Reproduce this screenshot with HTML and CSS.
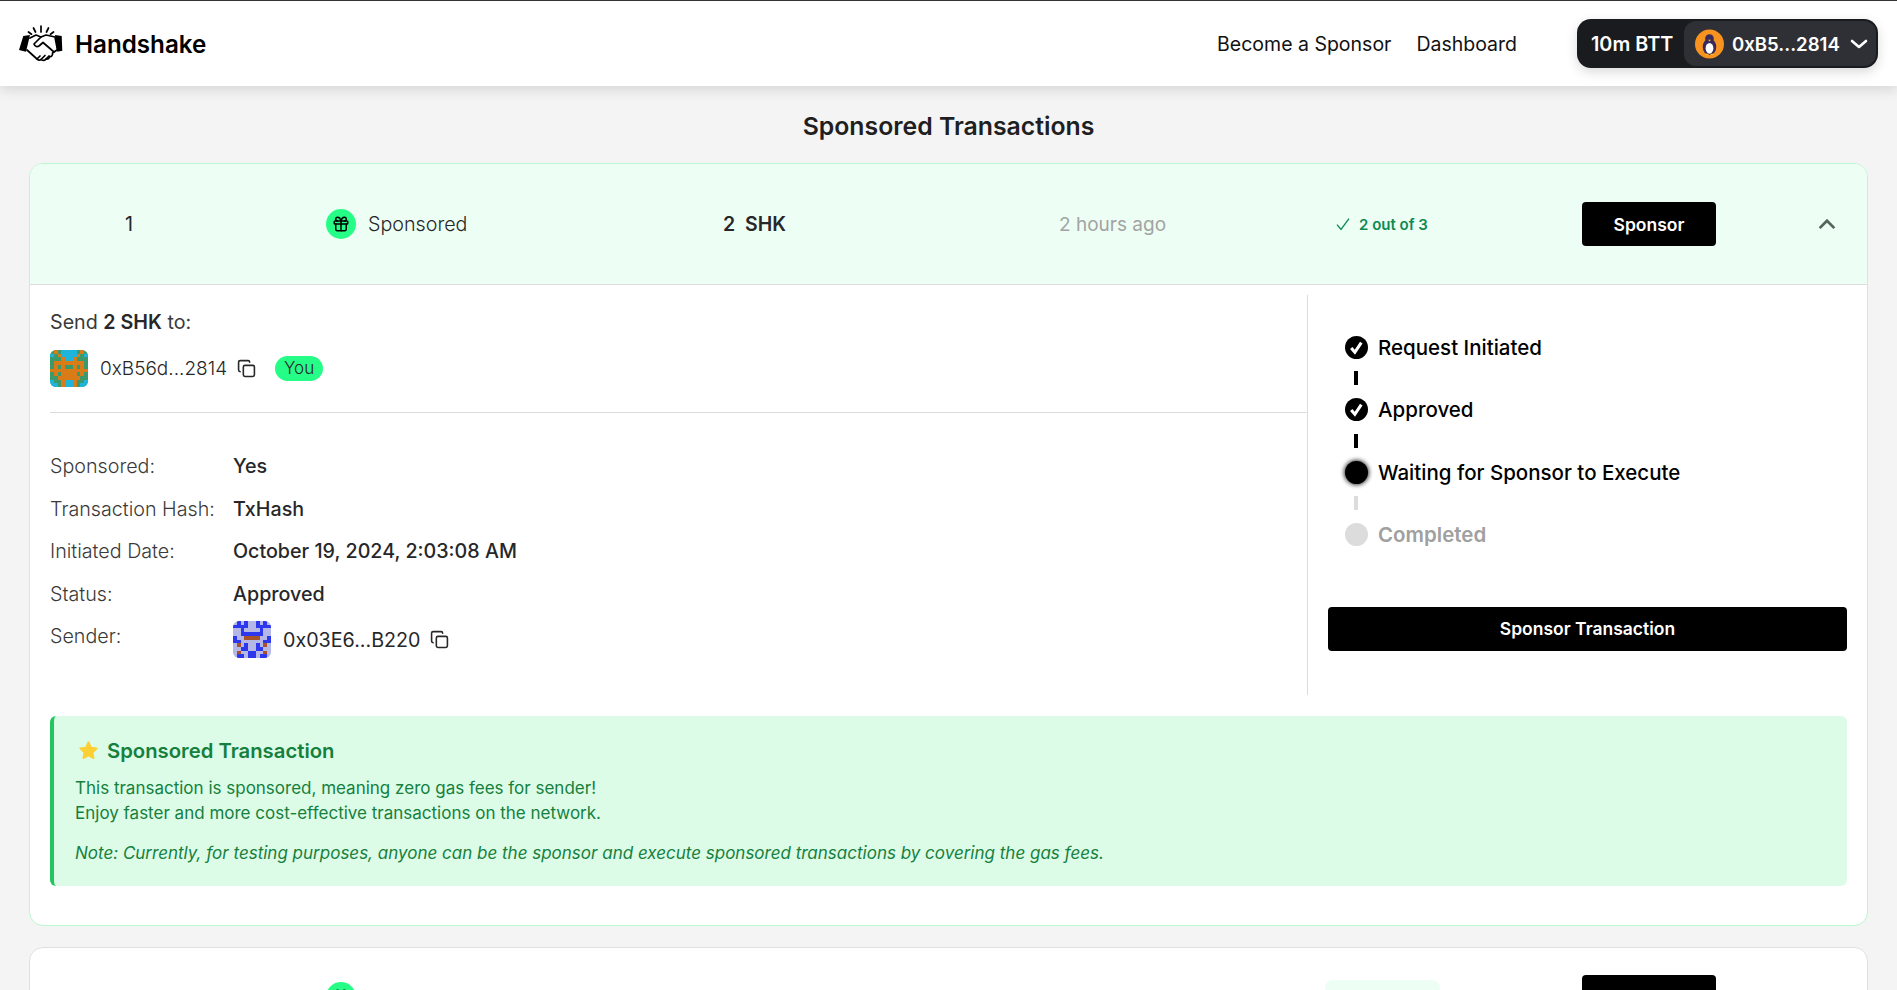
FILE: index.html
```html
<!DOCTYPE html>
<html lang="en">
<head>
<meta charset="utf-8">
<title>Handshake</title>
<link rel="stylesheet" href="styles.css">
</head>
<body>
<svg class="defs" aria-hidden="true">
  <symbol id="copy" viewBox="0 0 24 24"><rect x="8" y="8" width="14" height="14" rx="2" fill="none" stroke="currentColor" stroke-width="2"/><path d="M4 16c-1.1 0-2-.9-2-2V4c0-1.1.9-2 2-2h10c1.1 0 2 .9 2 2" fill="none" stroke="currentColor" stroke-width="2" stroke-linecap="round"/></symbol>
  <symbol id="gift" viewBox="0 0 24 24"><g fill="none" stroke="currentColor" stroke-width="2" stroke-linecap="round" stroke-linejoin="round"><rect x="3" y="8" width="18" height="4" rx="1"/><path d="M12 8v13"/><path d="M19 12v7a2 2 0 0 1-2 2H7a2 2 0 0 1-2-2v-7"/><path d="M7.5 8a2.5 2.5 0 0 1 0-5A4.8 8 0 0 1 12 8a4.8 8 0 0 1 4.500-5 2.500 2.500 0 0 1 0 5"/></g></symbol>
  <symbol id="tick" viewBox="0 0 24 24"><circle cx="12" cy="12" r="12" fill="#000"/><path d="M6.500 12.500l3.800 4.500L17 7" fill="none" stroke="#fff" stroke-width="3.200"/></symbol>
  <symbol id="chev" viewBox="0 0 24 24"><path d="M4 16.500l8-8 8 8" fill="none" stroke="currentColor" stroke-width="3"/></symbol>
  <symbol id="ok" viewBox="0 0 24 24"><path d="M3 13l6 7L21 4" fill="none" stroke="currentColor" stroke-width="2"/></symbol>
</svg>

<header class="topbar">
  <div class="brand">
    <svg class="logo" viewBox="0 0 44 38" aria-hidden="true">
      <path d="M4.300 11L11 10 7 26.700 0 25zM36 10l6.700 1 .6 14.700-5 1z" fill="#000"/>
      <g fill="none" stroke="#000" stroke-width="1.700" stroke-linecap="round" stroke-linejoin="round">
        <path d="M11 13l6-3 5 2 5-2 9 2 2.500 13"/>
        <path d="M8 25l10 9c1 1.500 3 1.500 4 .5 1.500 1.500 4 1 5-.5 2 .5 3.500-1 3.500-2.500 2 .5 3.500-1.500 3-3.500L38 25"/>
        <path d="M22 12l-7 7c1 3 3.500 3 5 2l4-3.500 11 9.500"/>
        <path d="M18 34l3-3M22 34.500l4-4M27 34l3-3"/>
        <path d="M22 1v6M14.500 3l2 4M29.500 3l-2 4M9.500 7l3 2.200M34.500 7l-3 2.200"/>
      </g>
    </svg>
    <span class="brand-name">Handshake</span>
  </div>
  <nav class="nav"><a>Become a Sponsor</a><a>Dashboard</a></nav>
  <div class="wallet">
    <span class="balance">10m BTT</span>
    <div class="account">
      <svg class="penguin" viewBox="0 0 30 30" aria-hidden="true">
        <circle cx="15" cy="15" r="15" fill="#f7931e"/>
        <ellipse cx="15" cy="18" rx="7" ry="8.500" fill="#3a2a5c"/>
        <circle cx="15" cy="9.500" r="4.500" fill="#3a2a5c"/>
        <ellipse cx="15" cy="19.500" rx="4" ry="5.500" fill="#fff"/>
        <path d="M13.500 10.500h3L15 12.500z" fill="#f7c21e"/>
        <path d="M10.500 26.500h3.500v-1.500h-3zM16 26.500h3.500l-.5-1.500h-3z" fill="#f7c21e"/>
      </svg>
      <span class="address">0xB5...2814</span>
      <svg class="wallet-chev" viewBox="0 0 18 10" aria-hidden="true"><path d="M2 2l7 6 7-6" fill="none" stroke="#fff" stroke-width="2.600" stroke-linecap="round" stroke-linejoin="round"/></svg>
    </div>
  </div>
</header>

<main class="page">
  <h1 class="title">Sponsored Transactions</h1>

  <section class="card card-open">
    <div class="row row-open">
      <span class="cell-num">1</span>
      <span class="cell-type"><span class="gift"><svg><use href="#gift"/></svg></span>Sponsored</span>
      <span class="cell-amount">2&nbsp; SHK</span>
      <span class="cell-time">2 hours ago</span>
      <span class="cell-status"><svg class="ok"><use href="#ok"/></svg>2 out of 3</span>
      <button class="btn btn-row">Sponsor</button>
      <svg class="row-chev"><use href="#chev"/></svg>
    </div>

    <div class="details">
      <div class="details-left">
        <p class="send">Send <b>2 SHK</b> to:</p>
        <div class="recipient">
          <svg class="blocky" viewBox="0 0 10 10" preserveAspectRatio="none" shape-rendering="crispEdges" aria-hidden="true">
            <rect width="10" height="10" fill="#3a9a6c"/>
            <path d="M1 0h1v1H1zM8 0h1v1H8zM2 1h1v1H2zM7 1h1v1H7zM3 2h4v1H3zM1 3h8v1H1zM1 4h1v1H1zM3 4h1v1H3zM6 4h1v1H6zM8 4h1v1H8zM0 5h10v1H0zM1 6h1v1H1zM3 6h4v1H3zM8 6h1v1H8zM2 7h6v1H2zM3 8h1v2H3zM6 8h1v2H6z" fill="#d97b17"/>
            <path d="M3 0h4v2H3zM4 2h2v1H4zM0 1h1v1H0zM9 1h1v1H9zM4 8h2v2H4zM0 8h1v1H0zM9 8h1v1H9zM0 9h2v1H0zM8 9h2v1H8z" fill="#1eb4dc"/>
          </svg>
          <span class="addr">0xB56d...2814</span>
          <svg class="copy"><use href="#copy"/></svg>
          <span class="you">You</span>
        </div>
        <hr class="rule">
        <dl class="facts">
          <dt>Sponsored:</dt><dd>Yes</dd>
          <dt>Transaction Hash:</dt><dd>TxHash</dd>
          <dt>Initiated Date:</dt><dd>October 19, 2024, 2:03:08 AM</dd>
          <dt>Status:</dt><dd>Approved</dd>
          <dt>Sender:</dt>
          <dd class="sender">
            <svg class="blocky" viewBox="0 0 10 10" preserveAspectRatio="none" shape-rendering="crispEdges" aria-hidden="true">
              <rect width="10" height="10" fill="#b5b8e6"/>
              <path d="M1 0h1v1H1zM3 0h1v1H3zM6 0h1v1H6zM8 0h1v1H8zM0 1h4v1H0zM6 1h4v1H6zM2 2h1v1H2zM7 2h1v1H7zM2 3h6v1H2zM0 4h1v2H0zM9 4h1v2H9zM1 5h1v1H1zM8 5h1v1H8zM3 6h1v2H3zM6 6h1v2H6zM2 7h1v1H2zM7 7h1v1H7zM4 8h2v1H4zM1 9h2v1H1zM4 9h2v1H4zM7 9h2v1H7z" fill="#2d37ee"/>
              <path d="M3 4h4v1H3zM1 6h1v1H1zM8 6h1v1H8zM1 8h1v1H1zM8 8h1v1H8z" fill="#a8522c"/>
            </svg>
            <span class="addr">0x03E6...B220</span>
            <svg class="copy"><use href="#copy"/></svg>
          </dd>
        </dl>
      </div>
      <div class="details-right">
        <ol class="steps">
          <li class="step"><svg class="step-icon"><use href="#tick"/></svg>Request Initiated</li>
          <li class="link"></li>
          <li class="step"><svg class="step-icon"><use href="#tick"/></svg>Approved</li>
          <li class="link"></li>
          <li class="step"><span class="dot dot-active"></span>Waiting for Sponsor to Execute</li>
          <li class="link link-off"></li>
          <li class="step step-off"><span class="dot dot-off"></span>Completed</li>
        </ol>
        <button class="btn btn-wide">Sponsor Transaction</button>
      </div>
    </div>

    <aside class="notice">
      <h2 class="notice-title">
        <svg class="star" viewBox="0 0 24 24" aria-hidden="true"><path d="M12 2.500l2.900 6.100 6.600.9-4.800 4.600 1.200 6.600L12 17.600l-5.900 3.100 1.200-6.600L2.500 9.500l6.600-.9z" fill="#fcd034" stroke="#fcd034" stroke-width="2" stroke-linejoin="round"/></svg>
        Sponsored Transaction
      </h2>
      <p class="notice-text">This transaction is sponsored, meaning zero gas fees for sender!<br>Enjoy faster and more cost-effective transactions on the network.</p>
      <p class="notice-note">Note: Currently, for testing purposes, anyone can be the sponsor and execute sponsored transactions by covering the gas fees.</p>
    </aside>
  </section>

  <section class="card">
    <div class="row row-closed">
      <span class="cell-num">2</span>
      <span class="cell-type"><span class="gift"><svg><use href="#gift"/></svg></span>Sponsored</span>
      <span class="cell-amount">2&nbsp; SHK</span>
      <span class="cell-time">2 hours ago</span>
      <span class="pill">Completed</span>
      <button class="btn btn-row">Sponsor</button>
      <svg class="row-chev"><use href="#chev"/></svg>
    </div>
  </section>
</main>
</body>
</html>
```
FILE: styles.css
```css
* { box-sizing: border-box; }
html, body { height: 100%; }
body {
  margin: 0;
  overflow: hidden;
  background: #f4f4f4;
  color: #27272a;
  font-family: "Inter", "Liberation Sans", sans-serif;
  font-size: 19.700px;
}
.defs { display: none; }

.topbar {
  display: flex;
  align-items: center;
  height: 86px;
  padding: 0 19px;
  background: #fff;
  border-top: 1px solid #333;
  box-shadow: 0 4px 12px rgba(0,0,0,.12);
  position: relative;
}
.brand { display: flex; align-items: center; gap: 12px; margin-right: auto; margin-top: 1px; }
.logo { width: 44px; height: 38px; }
.brand-name { font-size: 24.200px; font-weight: 600; color: #000; }
.nav { display: flex; gap: 25px; margin-right: 60px; padding-top: 1px; color: #111; font-size: 19.500px; }
.wallet {
  display: flex;
  align-items: center;
  width: 301px;
  height: 49px;
  padding: 2px;
  background: #1a1b1f;
  border-radius: 14px;
  color: #fff;
  font-size: 18.600px;
  font-weight: 600;
  box-shadow: 0 4px 12px rgba(0,0,0,.15);
}
.balance { width: 105px; padding: 1px 0 0 12px; font-size: 19.800px; white-space: nowrap; }
.address { padding-top: 1px; }
.account {
  flex: 1;
  display: flex;
  align-items: center;
  height: 45px;
  padding-left: 11px;
  background: #2f3036;
  border-radius: 12px;
}
.penguin { width: 29px; height: 30px; margin-right: 8px; }
.wallet-chev { width: 18px; height: 10px; margin-left: 10px; }

.page { padding: 0 29px; }
.title {
  margin: 0;
  padding: 24px 0 20px;
  text-align: center;
  font-size: 24.800px;
  line-height: 33px;
  font-weight: 600;
  color: #1f1f22;
}

.card {
  background: #fff;
  border: 1px solid #e0e0e0;
  border-radius: 14px;
  margin-bottom: 21px;
  overflow: hidden;
}
.card-open {
  border-color: #bbf7d0;
  padding-bottom: 39px;
}
.row {
  display: grid;
  grid-template-columns: 203px 397px 336px 276px 247px 235px 1fr;
  align-items: center;
  padding: 27px 0 27px 93px;
  min-height: 98px;
}
.row-open {
  padding: 38px 0 38px 93px;
  height: 121px;
  background: #edfef4;
  border-bottom: 1px solid #dcdcdc;
}
.row-closed .cell-num,
.row-closed .cell-type,
.row-closed .cell-amount,
.row-closed .cell-time { padding-top: 4px; }
.row-closed .gift { margin-top: -4px; }
.cell-num { padding-left: 2px; }
.cell-type { display: flex; align-items: center; gap: 12px; font-weight: 300; }
.gift {
  display: flex;
  align-items: center;
  justify-content: center;
  width: 30px;
  height: 30px;
  background: #26fd87;
  border-radius: 50%;
  color: #000;
}
.gift svg { width: 18px; height: 18px; }
.cell-amount { font-weight: 600; font-size: 19.500px; }
.cell-time { color: #a3a3a3; font-weight: 400; font-size: 19px; }
.cell-status {
  display: flex;
  align-items: center;
  gap: 8px;
  font-size: 15px;
  font-weight: 600;
  color: #0c8a52;
}
.ok { width: 16px; height: 16px; }
.pill {
  width: 115px;
  height: 34px;
  margin-left: -10px;
  background: #edfef4;
  border-radius: 8px;
  text-align: center;
  font-size: 15px;
  line-height: 34px;
  color: #0c8a52;
}
.btn {
  border: 0;
  border-radius: 4px;
  background: #000;
  color: #fff;
  font: 600 17.500px "Inter", "Liberation Sans", sans-serif;
}
.btn-row { width: 134px; height: 44px; }
.row-chev { width: 22px; height: 22px; margin-left: -1px; color: #55665c; }

.details { display: grid; grid-template-columns: 1278px 1fr; margin-top: 10px; }
.details-left {
  height: 400px;
  padding-left: 20px;
  border-right: 1px solid #dcdcdc;
}
.send { margin: 0; padding-top: 13px; line-height: 28px; font-weight: 400; color: #3a3a3a; }
.send b { font-weight: 600; color: #27272a; }
.recipient { display: flex; align-items: center; margin-top: 14px; }
.blocky { width: 38px; height: 37px; border-radius: 6px; margin-right: 12px; flex: none; }
.addr { font-weight: 300; color: #27272a; font-size: 19px; }
.copy { width: 19px; height: 19px; margin-left: 10px; color: #27272a; }
.you {
  margin-left: 19px;
  padding: 0 9px;
  height: 25px;
  line-height: 25px;
  background: #26fd87;
  border-radius: 13px;
  font-weight: 300;
  font-size: 17px;
}
.rule { margin: 25px 0 41px; border: 0; border-top: 1px solid #dcdcdc; }
.facts {
  display: grid;
  grid-template-columns: 183px 1fr;
  row-gap: 18.500px;
  margin: 0;
  line-height: 24px;
}
.facts dt { font-weight: 300; color: #3a3a3a; }
.facts dd { margin: 0; font-weight: 500; color: #27272a; }
.facts .sender { display: flex; align-items: center; margin-top: -3px; font-weight: 400; }
.sender .addr { font-weight: 400; font-size: 19.700px; }

.details-right { padding: 40px 20px 0 20px; }
.steps { list-style: none; margin: 0; padding: 0 0 0 17px; font-size: 20.500px; }
.step {
  display: flex;
  align-items: center;
  gap: 10px;
  height: 24px;
  font-weight: 500;
  color: #000;
}
.step-icon { width: 23px; height: 23px; flex: none; }
.dot { width: 23px; height: 23px; border-radius: 50%; flex: none; }
.dot-active { background: #000; box-shadow: 0 0 4px 1px rgba(0,0,0,.8); }
.dot-off { background: #dcdcdc; }
.step-off { color: #a0a0a0; font-weight: 600; }
.link {
  width: 4px;
  height: 14px;
  margin: 12.250px 0 12.250px 9px;
  background: #000;
}
.link-off { background: #dcdcdc; }
.btn-wide { display: block; width: 519px; height: 44px; margin-top: 60px; }

.notice {
  margin: 21px 20px 0 20px;
  height: 170px;
  padding: 21px 20px 0 21px;
  background: #dcfce7;
  border-left: 4px solid #22c55e;
  border-radius: 6px;
  color: #15803d;
}
.notice-title {
  display: flex;
  align-items: center;
  gap: 8px;
  margin: 0 0 12px;
  font-size: 20.300px;
  line-height: 27px;
  font-weight: 600;
}
.star { width: 21px; height: 21px; margin-left: 3px; }
.notice-text { margin: 0; font-size: 17px; line-height: 25px; font-weight: 400; }
.notice-note { margin: 15px 0 0; font-size: 17px; line-height: 25px; font-style: italic; }
```
